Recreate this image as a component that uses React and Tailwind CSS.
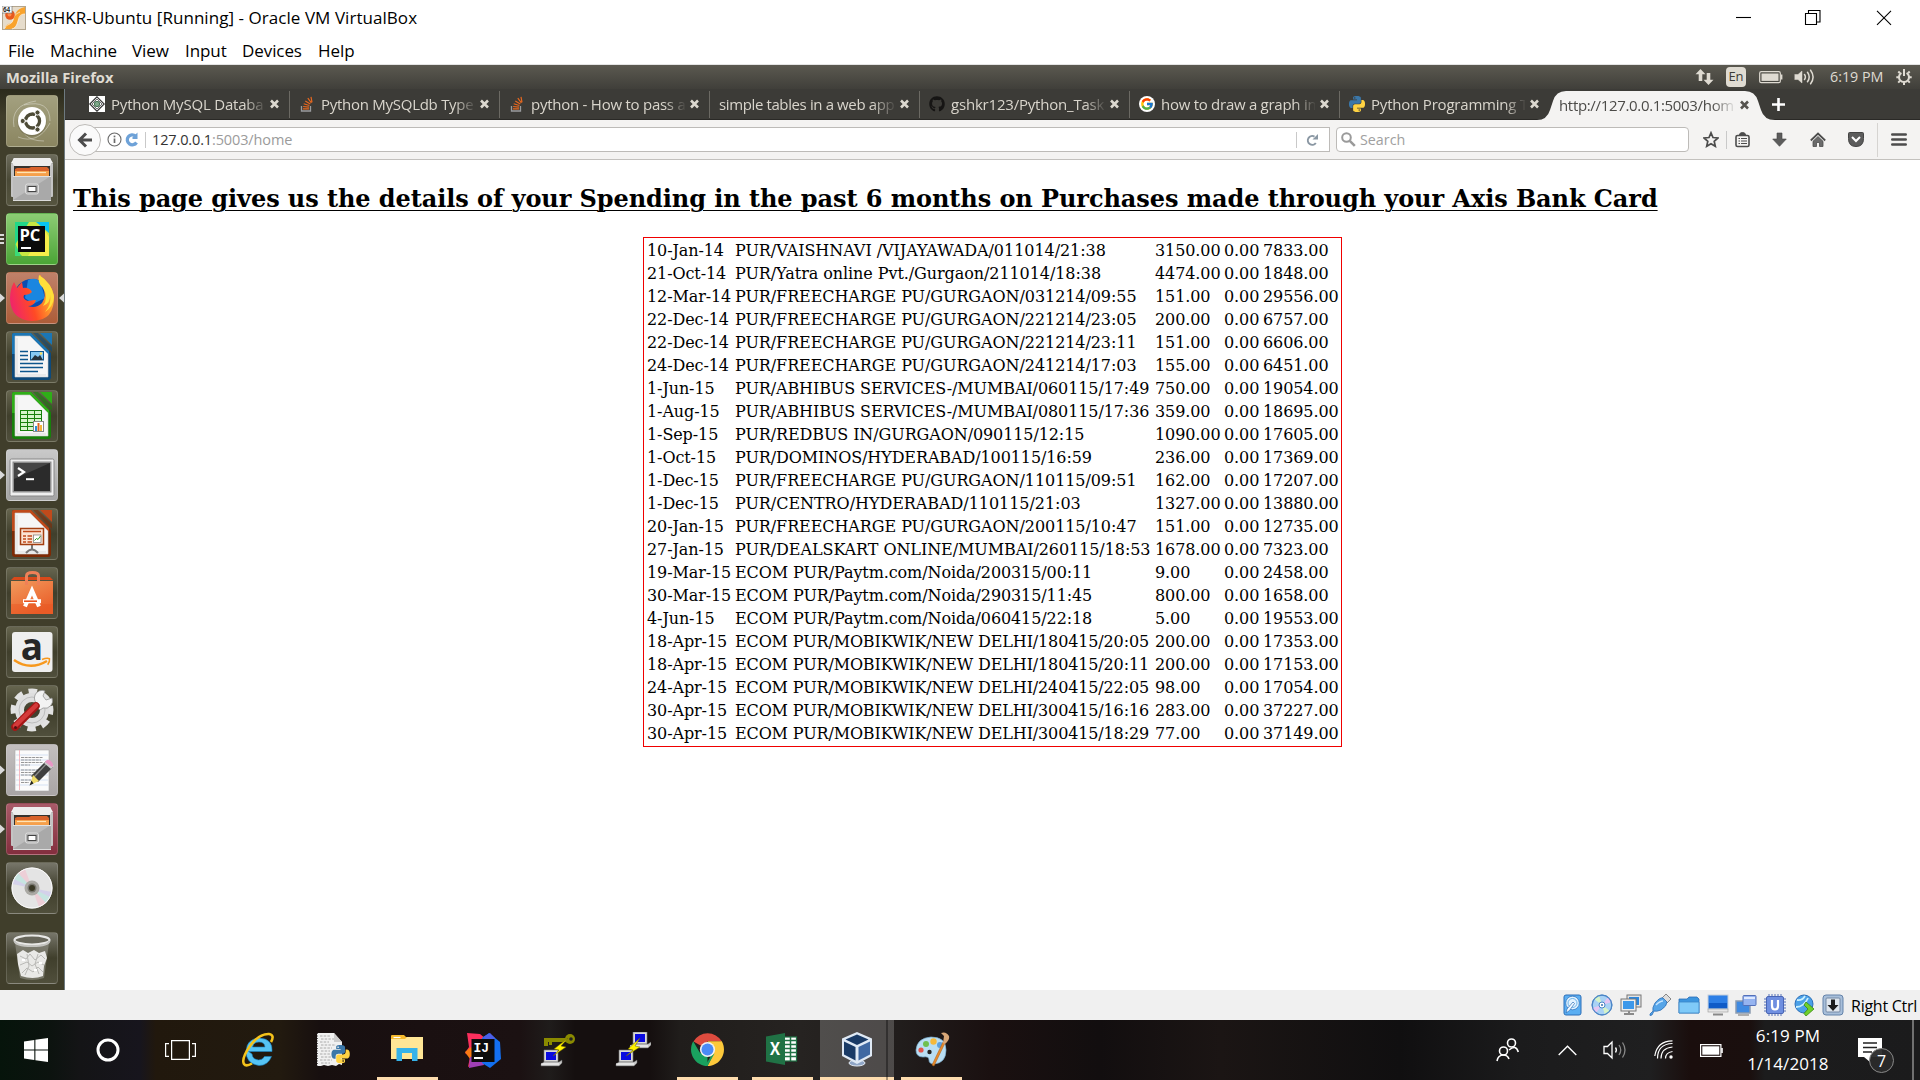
import React from "react";
import { FaGithub } from "react-icons/fa";
import { FcGoogle } from "react-icons/fc";

const rows = [
  ["10-Jan-14", "PUR/VAISHNAVI /VIJAYAWADA/011014/21:38", "3150.00", "0.00", "7833.00"],
  ["21-Oct-14", "PUR/Yatra online Pvt./Gurgaon/211014/18:38", "4474.00", "0.00", "1848.00"],
  ["12-Mar-14", "PUR/FREECHARGE PU/GURGAON/031214/09:55", "151.00", "0.00", "29556.00"],
  ["22-Dec-14", "PUR/FREECHARGE PU/GURGAON/221214/23:05", "200.00", "0.00", "6757.00"],
  ["22-Dec-14", "PUR/FREECHARGE PU/GURGAON/221214/23:11", "151.00", "0.00", "6606.00"],
  ["24-Dec-14", "PUR/FREECHARGE PU/GURGAON/241214/17:03", "155.00", "0.00", "6451.00"],
  ["1-Jun-15", "PUR/ABHIBUS SERVICES-/MUMBAI/060115/17:49", "750.00", "0.00", "19054.00"],
  ["1-Aug-15", "PUR/ABHIBUS SERVICES-/MUMBAI/080115/17:36", "359.00", "0.00", "18695.00"],
  ["1-Sep-15", "PUR/REDBUS IN/GURGAON/090115/12:15", "1090.00", "0.00", "17605.00"],
  ["1-Oct-15", "PUR/DOMINOS/HYDERABAD/100115/16:59", "236.00", "0.00", "17369.00"],
  ["1-Dec-15", "PUR/FREECHARGE PU/GURGAON/110115/09:51", "162.00", "0.00", "17207.00"],
  ["1-Dec-15", "PUR/CENTRO/HYDERABAD/110115/21:03", "1327.00", "0.00", "13880.00"],
  ["20-Jan-15", "PUR/FREECHARGE PU/GURGAON/200115/10:47", "151.00", "0.00", "12735.00"],
  ["27-Jan-15", "PUR/DEALSKART ONLINE/MUMBAI/260115/18:53", "1678.00", "0.00", "7323.00"],
  ["19-Mar-15", "ECOM PUR/Paytm.com/Noida/200315/00:11", "9.00", "0.00", "2458.00"],
  ["30-Mar-15", "ECOM PUR/Paytm.com/Noida/290315/11:45", "800.00", "0.00", "1658.00"],
  ["4-Jun-15", "ECOM PUR/Paytm.com/Noida/060415/22:18", "5.00", "0.00", "19553.00"],
  ["18-Apr-15", "ECOM PUR/MOBIKWIK/NEW DELHI/180415/20:05", "200.00", "0.00", "17353.00"],
  ["18-Apr-15", "ECOM PUR/MOBIKWIK/NEW DELHI/180415/20:11", "200.00", "0.00", "17153.00"],
  ["24-Apr-15", "ECOM PUR/MOBIKWIK/NEW DELHI/240415/22:05", "98.00", "0.00", "17054.00"],
  ["30-Apr-15", "ECOM PUR/MOBIKWIK/NEW DELHI/300415/16:16", "283.00", "0.00", "37227.00"],
  ["30-Apr-15", "ECOM PUR/MOBIKWIK/NEW DELHI/300415/18:29", "77.00", "0.00", "37149.00"],
];

const PY =
  "M14.25.18l.9.2.73.26.59.3.45.32.34.34.25.34.16.33.1.3.04.26.02.2-.01.13V8.5l-.05.63-.13.55-.21.46-.26.38-.3.31-.33.25-.35.19-.35.14-.33.1-.3.07-.26.04-.21.02H8.77l-.69.05-.59.14-.5.22-.41.27-.33.32-.27.35-.2.36-.15.37-.1.35-.07.32-.04.27-.02.21v3.06H3.17l-.21-.03-.28-.07-.32-.12-.35-.18-.36-.26-.36-.36-.35-.46-.32-.59-.28-.73-.21-.88-.14-1.05-.05-1.23.06-1.22.16-1.04.24-.87.32-.71.36-.57.4-.44.42-.33.42-.24.4-.16.36-.1.32-.05.24-.01h.16l.06.01h8.16v-.83H6.18l-.01-2.75-.02-.37.05-.34.11-.31.17-.28.25-.26.31-.23.38-.2.44-.18.51-.15.58-.12.64-.1.71-.06.77-.04.84-.02 1.27.05zm-6.3 1.98l-.23.33-.08.41.08.41.23.34.33.22.41.09.41-.09.33-.22.23-.34.08-.41-.08-.41-.23-.33-.33-.22-.41-.09-.41.09z";

const PyPaths = () => (
  <>
    <path d={PY} fill="#3b77a8" />
    <path d={PY} fill="#ffd343" transform="rotate(180 12 12)" />
  </>
);

/* ---------- host window ---------- */

const VBoxSmall = () => (
  <svg className="h-6 w-6 shrink-0" viewBox="0 0 24 24">
    <rect x=".5" y=".5" width="23" height="23" fill="#e6dccb" stroke="#b3a58d" />
    <path d="M23 1v7c-5 0-6 4-7 7s-2 8-8 8H3c0-4 3-5 6-6 3-2 2-5 4-8 2-5 5-7 10-8z" fill="#f9a32c" />
    <path d="M23 8c-6 0-6 4-7 7s-2 7-6 8M3 22c1-4 7-3 8-8s3-6 7-8" fill="none" stroke="#fff" strokeWidth=".9" opacity=".7" />
    <circle cx="8" cy="9" r="4.800" fill="#e8591c" />
    <circle cx="7.500" cy="8.500" r="2" fill="#ff8c4c" />
    <rect x="0" y="0" width="10" height="7" fill="#fff" stroke="#777" strokeWidth=".7" />
    <text x="1" y="6" fontSize="6.500" fontWeight="700" fontFamily="Liberation Sans, sans-serif" fill="#222">64</text>
  </svg>
);

function TitleBar() {
  return (
    <header className="flex h-[34px] items-center bg-white pl-0.5 pt-px">
      <VBoxSmall />
      <h1 className="ml-[5px] whitespace-nowrap text-[17px] leading-6 tracking-[0.05px] text-black">
        GSHKR-Ubuntu [Running] - Oracle VM VirtualBox
      </h1>
      <svg className="ml-auto mr-[27px] h-4 w-[158px] shrink-0" viewBox="0 0 158 16" fill="none" stroke="#000" strokeWidth="1.100">
        <path d="M1 7.500h15" />
        <path d="M70.500 3.500h11v11h-11zM73.500 3.500v-3h11.500v11.500h-3.500" />
        <path d="M142 .8l14 14M156 .8l-14 14" />
      </svg>
    </header>
  );
}

function MenuBar() {
  return (
    <nav className="flex h-[31px] items-center gap-4 border-b border-[#e4e4e4] bg-white pl-2 pt-[3px] text-[17px] leading-6 tracking-[-0.08px] text-black">
      <span className="w-[26px]">File</span>
      <span className="w-[66px]">Machine</span>
      <span className="w-[37px]">View</span>
      <span className="w-[41px]">Input</span>
      <span className="w-[60px]">Devices</span>
      <span className="w-[40px]">Help</span>
    </nav>
  );
}

/* ---------- guest top panel ---------- */

function TopPanel() {
  return (
    <div className="flex h-6 items-center bg-gradient-to-b from-[#5b5950] to-[#403f3a] pb-px pl-1.5 pr-2 text-[15px] text-[#dfdbd2]">
      <span className="text-[14.700px] font-bold leading-5">Mozilla Firefox</span>
      <svg className="ml-auto h-4 w-[19px]" viewBox="0 0 19 16" fill="#dfdbd2">
        <path d="M5.500 0l5 5.300H7.300V12H3.700V5.300H.5zM13.500 16l-5-5.300h3.200V4h3.600v6.700h3.200z" />
      </svg>
      <span className="ml-[12px] flex h-5 w-5 items-center justify-center rounded-sm bg-[#dfdbd2] text-[13px] leading-none text-[#3c3b37]">En</span>
      <svg className="ml-[13px] h-3.5 w-6" viewBox="0 0 24 14">
        <rect x=".7" y="1.700" width="20.600" height="11" rx="1.500" fill="none" stroke="#dfdbd2" strokeWidth="1.200" />
        <rect x="2.500" y="3.500" width="17" height="7.400" fill="#dfdbd2" />
        <path d="M22.600 4.500v5" stroke="#dfdbd2" strokeWidth="1.600" />
      </svg>
      <svg className="ml-[11px] h-[18px] w-[22px]" viewBox="0 0 22 18" fill="none" stroke="#dfdbd2" strokeWidth="1.500" strokeLinecap="round">
        <path d="M1 6.500h3L8 3v12l-4-3.500H1z" fill="#dfdbd2" strokeWidth=".5" />
        <path d="M10.500 6.500q1.800 2.500 0 5M13.500 4.300q3.400 4.700 0 9.400M16.600 2.200q5 6.800 0 13.600" />
      </svg>
      <span className="ml-[14px] w-[53px] whitespace-nowrap text-[14.300px] leading-5">6:19 PM</span>
      <svg className="ml-[13px] h-[18px] w-4" viewBox="0 0 16 18" fill="none" stroke="#dfdbd2">
        <path d="M5.400 4.800a5 5 0 1 0 5.200 0" strokeWidth="2" />
        <path d="M8 1v7" strokeWidth="2" />
        <path d="M3.800 5L2.300 3.500M12.200 5l1.500-1.500M3 9.200H.3M13 9.200h2.700M3.800 13l-1.600 1.600M12.200 13l1.600 1.600M8 14.500v2.600" strokeWidth="2" />
      </svg>
    </div>
  );
}

/* ---------- launcher ---------- */

const Cabinet = () => (
  <>
    <path d="M5 9L8 4h36l3 5z" fill="#f2f2f2" />
    <rect x="5" y="9" width="42" height="34" rx="1" fill="#c4c4c4" />
    <rect x="7" y="4" width="38" height="8" rx="2" fill="#ededed" />
    <rect x="8" y="12" width="36" height="11" fill="#35322e" />
    <path d="M9 15l2-1h12l2-1h16l2 2v8H9z" fill="#d8622b" />
    <path d="M9 17h34v6H9z" fill="#f6a04b" />
    <path d="M11 18.500h29" stroke="#ffe3b5" strokeWidth="1.200" />
    <path d="M7 22h38v25H7z" fill="#a9a9a9" />
    <path d="M7 22h38L7 46z" fill="#bcbcbc" />
    <path d="M7 22.500h38" stroke="#e2e2e2" />
    <path d="M7 46.500h38" stroke="#dcdcdc" />
    <rect x="19.500" y="30" width="13" height="10" rx="2" fill="#b4b4b4" stroke="#dedede" />
    <rect x="22" y="32.500" width="8" height="5" fill="#fff" stroke="#444" />
  </>
);

const OfficeDoc = ({ c, d, children }) => (
  <>
    <path d="M8 2h17l20 20v24q0 3-3 3H9q-3 0-3-3V4q0-2 2-2z" fill={d} />
    <path d="M8 2h17l18 18v3H6V4q0-2 2-2z" fill={c} />
    <path d="M34 2h12v12z" fill={c} />
    <path d="M27 2h5l14 14v5z" fill={d} opacity=".6" />
    <path d="M9 5h15l18 18v23H9z" fill="#f6f6f6" stroke="#c9c9c9" strokeWidth=".6" />
    <path d="M11 7v37h29" fill="none" stroke="#ddd" />
    {children}
  </>
);

const tileArt = {
  ubuntu: (
    <>
      <path d="M8 32Q4 10 30 6M12 42q20 8 32-14M44 26Q44 4 18 10M38 46Q12 46 14 20" fill="none" stroke="#fff" strokeWidth="1" opacity=".35" />
      <circle cx="26" cy="27" r="14.500" fill="#6f6b4c" opacity=".6" />
      <circle cx="26" cy="26" r="14" fill="#fff" />
      <circle cx="26.500" cy="26" r="7" fill="none" stroke="#4d4b36" strokeWidth="3.400" />
      <path d="M26.500 26L14 26M26.500 26l6-11M26.500 26l6 11" stroke="#fff" strokeWidth="1.400" />
      <circle cx="26.500" cy="26" r="5" fill="#fff" />
      <g fill="#4d4b36" stroke="#fff" strokeWidth="1">
        <circle cx="16.700" cy="26" r="2.600" />
        <circle cx="31.500" cy="17.500" r="2.600" />
        <circle cx="31.500" cy="34.500" r="2.600" />
      </g>
    </>
  ),
  files: <Cabinet />,
  pycharm: (
    <>
      <path d="M9 9h24l10 5v29H16L9 37z" fill="#c8e842" />
      <path d="M9 9h14L9 32z" fill="#21d789" />
      <path d="M30 9h13v11z" fill="#07c3f2" />
      <path d="M9 43V30l6 13z" fill="#3bdb78" />
      <path d="M38 16l5 8v19H22z" fill="#f5ee4a" />
      <rect x="12" y="13" width="27" height="26" fill="#0b0b0b" />
      <text x="13.500" y="27.500" fontSize="16.500" fontWeight="700" fontFamily="Open Sans, sans-serif" fill="#fff">PC</text>
      <rect x="15" y="34" width="10" height="2" fill="#fff" />
    </>
  ),
  firefox: (
    <>
      <circle cx="26" cy="25" r="18" fill="#0a4db0" />
      <path d="M22 8q9-4 13 4l4 14-12 6-8-6z" fill="#1a86e0" />
      <path d="M33 3q12 8 15 20 1 26-22 26Q5 48 4 27 4 17 8 10l3 6 5-6 1 6q6-1 9 4-3 3-8 3-2 4 4 6 5-1 8-1-2 6-8 6 8 3 14-3 5-7 1-16-5-6-2-12z" fill="url(#fox)" />
      <path d="M33 3q-2 8 4 13 6 9 0 18 8-3 7-12 2 10-5 18 8-5 9-15Q46 11 33 3z" fill="#ffdf3a" />
    </>
  ),
  writer: (
    <OfficeDoc c="#1b76b5" d="#0d4a7c">
      <path d="M14 20.500h8M14 24.500h8M14 28.500h8M14 32.500h23M14 36.500h23M14 40.500h18" stroke="#0d568d" strokeWidth="1.700" />
      <rect x="24.500" y="20.500" width="13" height="8.500" fill="#86c9f3" stroke="#0d568d" />
      <path d="M25 29l4-5 3 2 2-2 3 5z" fill="#26333c" />
      <circle cx="35" cy="22.500" r="1.200" fill="#ffe05c" />
    </OfficeDoc>
  ),
  calc: (
    <OfficeDoc c="#2fae18" d="#17800b">
      <rect x="14.500" y="20.500" width="21" height="20" fill="#d6f4cb" stroke="#17800b" />
      <path d="M14 24.500h22M14 28.500h22M14 32.500h22M14 36.500h22M21.500 20v21M28.500 20v21" stroke="#17800b" />
      <rect x="27.500" y="31.500" width="10" height="10" fill="#fff" stroke="#888" />
      <path d="M29 36h2v5h-2z" fill="#2a8fd8" />
      <path d="M31.500 33h2v8h-2z" fill="#e06520" />
      <path d="M34 35h2v6h-2z" fill="#f4b53a" />
    </OfficeDoc>
  ),
  impress: (
    <OfficeDoc c="#c04a1b" d="#7e2a05">
      <path d="M26 37v4M20 45q6-7 12 0" stroke="#777" strokeWidth="2" fill="none" />
      <rect x="14.500" y="20.500" width="23" height="16" fill="#fbe3d3" stroke="#a33e10" strokeWidth="1.500" />
      <path d="M17 23.500h18M17 28h3M17 31h3M17 34h3M21.500 28h4.500M21.500 31h4.500M21.500 34h4.500" stroke="#c04a1b" strokeWidth="1.600" />
      <rect x="27.500" y="27" width="7.500" height="7.500" fill="#fff" stroke="#777" strokeWidth=".7" />
      <path d="M28.500 32.500l2-2 1.500 1 2.500-3.500" stroke="#2a9a20" fill="none" />
    </OfficeDoc>
  ),
  terminal: (
    <>
      <rect x="4" y="10" width="44" height="37" rx="1.500" fill="#efefef" stroke="#888" />
      <rect x="6.500" y="12.500" width="39" height="31" fill="#8e8e8e" />
      <rect x="8" y="14" width="36" height="28" fill="#2b2b2b" />
      <path d="M8 14h36L8 30z" fill="#454545" />
      <path d="M12 19l6 4-6 4" stroke="#fff" strokeWidth="2.200" fill="none" />
      <path d="M20 30.200h8" stroke="#fff" strokeWidth="2" />
    </>
  ),
  software: (
    <>
      <path d="M5 13l3-3h36l3 3z" fill="#d8491a" />
      <path d="M5 14h42v33H5z" fill="url(#bag)" />
      <path d="M20.500 18V9q0-3.500 6-3.500t6 3.500v9" fill="none" stroke="#ee8058" strokeWidth="3" />
      <path d="M5 37h42v10H5z" fill="#e95420" opacity=".4" />
      <path d="M19 39.500l7-16 7 16" fill="none" stroke="#fff" strokeWidth="4" />
      <path d="M17 34.200h18" stroke="#fff" strokeWidth="4" />
      <path d="M18 34.200h13" stroke="#e95420" strokeWidth="1.600" />
    </>
  ),
  amazon: (
    <>
      <rect x="6" y="6" width="40.500" height="40" rx="3" fill="#efefef" />
      <text x="26" y="34" textAnchor="middle" fontSize="37" fontWeight="700" fontFamily="Open Sans, sans-serif" fill="#262626">a</text>
      <path d="M8 34q16 11 33 1" fill="none" stroke="#f7981d" strokeWidth="2.400" />
      <path d="M36 33.500q5-2 7.500-.8.500 3-1.800 6" fill="none" stroke="#f7981d" strokeWidth="1.500" />
    </>
  ),
  settings: (
    <>
      <circle cx="26" cy="25" r="18.500" fill="none" stroke="#e2e2e2" strokeWidth="6" strokeDasharray="8.200 6.330" transform="rotate(-12 26 25)" />
      <circle cx="26" cy="25" r="12.500" fill="none" stroke="#dedede" strokeWidth="9" />
      <circle cx="26" cy="25" r="13" fill="none" stroke="#bdbdbd" />
      <path d="M33 20a7.500 7.500 0 0 1 6-14l-2 5 3 4 6-2a7.500 7.500 0 0 1-9 10l-3 2-4-3z" fill="#f3f3f3" stroke="#888" strokeWidth=".7" />
      <path d="M30 21L9 42" stroke="#a51616" strokeWidth="7.500" strokeLinecap="round" />
      <path d="M30 20.500L9 41" stroke="#d43a3a" strokeWidth="4.500" strokeLinecap="round" />
      <circle cx="9.500" cy="42.500" r="1.500" fill="#551010" />
    </>
  ),
  gedit: (
    <>
      <path d="M9 6h34v41H9z" fill="#fbfbfb" stroke="#aaa" strokeWidth=".6" />
      <path d="M10 11h32M10 16h32M10 21h32M10 26h32M10 31h32M10 36h32M10 41h32" stroke="#cddcf2" strokeWidth=".8" />
      <path d="M13.500 6v40" stroke="#f4a9b2" strokeWidth=".8" />
      <path d="M15 13.500h22M15 16h20M15 18.500h22M15 21h9M15 26h21M15 28.500h18M15 31h12M15 36h10M15 38.500h8" stroke="#8b8b8b" strokeWidth=".9" strokeDasharray="3 .7" />
      <path d="M40 17l7 6-15 15-7-6z" fill="#3f3f3f" />
      <path d="M42 18l-14 15" stroke="#8b8b8b" strokeWidth="1.300" />
      <path d="M38 19l3-3 7 6-3 3z" fill="#ccc" />
      <path d="M41 16q3-1 6 4v2l-1 1-7-5z" fill="#e897c5" />
      <path d="M27 31l6 6-9 4z" fill="#f0dc6a" />
      <path d="M25.500 36.500l2 3-4 2z" fill="#222" />
    </>
  ),
  cabinet: <Cabinet />,
  disc: (
    <>
      <circle cx="26" cy="26" r="20.500" fill="#e4e4e4" />
      <path d="M26 26L12 11A20 20 0 0 1 19 7zM26 26L40 41A20 20 0 0 1 33 45z" fill="#f5b9c9" opacity=".5" />
      <path d="M26 26L8 17A20 20 0 0 1 12 11zM26 26L44 35A20 20 0 0 1 40 41z" fill="#a9e5dd" opacity=".5" />
      <path d="M26 26L6.500 22A20 20 0 0 1 8 17zM26 26L45.500 30A20 20 0 0 1 44 35z" fill="#c3bdf0" opacity=".5" />
      <circle cx="26" cy="26" r="20" fill="none" stroke="#fafafa" />
      <circle cx="26" cy="26" r="7.500" fill="#aaa9a4" />
      <circle cx="26" cy="26" r="4.500" fill="#77766f" />
      <circle cx="26" cy="26" r="3" fill="#3a3926" />
    </>
  ),
  trash: (
    <>
      <path d="M9 11l5 35q12 4 24 0l5-35z" fill="#a9a99f" opacity=".45" />
      <path d="M11 22l6-4 5 3 6-3 5 3 6-2 2 7-3 8-1 10q-10 4-22 0l-3-12z" fill="#e9e9e7" />
      <path d="M14 24l6 3 4-5 5 6 6-5 4 4M14 33l7-3 5 4 6-4 6 3M16 41l5-5 6 4 5-5 5 5M21 22l2 12-4 9M32 22l-3 10 4 10" stroke="#b9b9b6" strokeWidth="1" fill="none" />
      <path d="M16 28h3M28 38h3M33 31h3" stroke="#fff" strokeWidth="2" />
      <ellipse cx="26" cy="8" rx="17.500" ry="4.500" fill="#67665a" stroke="#e8e8e6" strokeWidth="2.200" />
      <path d="M8.500 9q1 5 17.500 5T43.500 9" fill="none" stroke="#c4c4c0" strokeWidth="2" />
    </>
  ),
};

const launcherTiles = [
  { id: "ubuntu", cls: "from-[#a3a07f] to-[#8b8661]" },
  { id: "files", cls: "from-[#6c6b5b] via-[#4a4936] to-[#55543f]" },
  { id: "pycharm", cls: "from-[#8ccc74] to-[#4aa535]", left: "bars" },
  { id: "firefox", cls: "from-[#bf8169] to-[#ad5d38]", left: "tri", right: true },
  { id: "writer", cls: "from-[#66654f] via-[#403f2c] to-[#504f3c]" },
  { id: "calc", cls: "from-[#66654f] via-[#403f2c] to-[#504f3c]" },
  { id: "terminal", cls: "from-[#c9c9c9] to-[#a4a4a4]", left: "tri" },
  { id: "impress", cls: "from-[#66654f] via-[#403f2c] to-[#504f3c]" },
  { id: "software", cls: "from-[#66654f] via-[#403f2c] to-[#504f3c]" },
  { id: "amazon", cls: "from-[#66654f] via-[#403f2c] to-[#504f3c]" },
  { id: "settings", cls: "from-[#66654f] via-[#403f2c] to-[#504f3c]" },
  { id: "gedit", cls: "from-[#c3bfbf] to-[#a9a5a5]", left: "tri" },
  { id: "cabinet", cls: "from-[#a85a68] to-[#832e3e]", left: "tri" },
  { id: "disc", cls: "from-[#77766a] via-[#403f2c] to-[#504f3c]" },
  { id: "trash", cls: "from-[#77766a] via-[#403f2c] to-[#504f3c]", gap: true },
];

function Launcher() {
  return (
    <aside className="flex w-[65px] shrink-0 flex-col gap-[7px] border-r border-[#6e7a80] bg-gradient-to-b from-[#2b2a1c] via-[#403e2b] via-[3%] to-[#403e2b] pt-1.5">
      {launcherTiles.map((t) => (
        <div key={t.id} className={"flex h-[52px] items-center " + (t.gap ? "mt-[11px]" : "")}>
          <svg className="h-3 w-1.5 shrink-0" viewBox="0 0 6 12">
            {t.left === "tri" && <path d="M0 1.500l5 4.500-5 4.500z" fill="#d9d9d9" />}
            {t.left === "bars" && <path d="M0 2h4M0 6h4M0 10h4" stroke="#d9d9d9" strokeWidth="2" />}
          </svg>
          <div className={"h-[52px] w-[52px] shrink-0 rounded border border-white/15 bg-gradient-to-b " + t.cls}>
            <svg className="-ml-px -mt-px h-[52px] w-[52px]" viewBox="0 0 52 52">
              <defs>
                {t.id === "firefox" && (
                  <linearGradient id="fox" x1="0" y1=".6" x2="1" y2=".3">
                    <stop offset="0" stopColor="#f0246b" />
                    <stop offset=".45" stopColor="#ff4a25" />
                    <stop offset="1" stopColor="#ffc930" />
                  </linearGradient>
                )}
                {t.id === "software" && (
                  <linearGradient id="bag" x1="0" y1="0" x2=".6" y2="1">
                    <stop offset="0" stopColor="#f19a5c" />
                    <stop offset="1" stopColor="#ea5f2a" />
                  </linearGradient>
                )}
              </defs>
              {tileArt[t.id]}
            </svg>
          </div>
          {t.right && (
            <svg className="h-3 w-1.5 shrink-0" viewBox="0 0 6 12"><path d="M6 1.500L1 6l5 4.500z" fill="#d9d9d9" /></svg>
          )}
        </div>
      ))}
    </aside>
  );
}

/* ---------- browser ---------- */

const StackIcon = () => (
  <svg className="h-4 w-4" viewBox="0 0 16 16" fill="none">
    <path d="M2.500 10v5h9v-5" stroke="#9a9c9f" strokeWidth="1.300" />
    <path d="M4 12.800h6M4.100 10.500l5.900.7M4.700 7.800l5.700 1.700M6.300 4.900l5 3M8.800 2.200l3.600 4.600M12 .8l1 5.500" stroke="#e8681f" strokeWidth="1.200" />
  </svg>
);

const favicons = {
  diamond: (
    <svg className="h-4 w-4 bg-white" viewBox="0 0 16 16" fill="none" stroke="#333">
      <path d="M8 .8L15.200 8 8 15.200.8 8z" strokeWidth="1.200" />
      <path d="M8 3l5 5-5 5-5-5z" strokeWidth=".7" />
      <circle cx="8" cy="8" r="2.700" fill="#7fa88a" stroke="#2a5a3a" strokeWidth=".8" />
    </svg>
  ),
  stack: <StackIcon />,
  github: <FaGithub className="h-4 w-4 text-[#161514]" />,
  google: (
    <span className="flex h-4 w-4 items-center justify-center rounded-full bg-white">
      <FcGoogle className="h-3.5 w-3.5" />
    </span>
  ),
  python: <svg className="h-4 w-4" viewBox="0 0 24 24"><PyPaths /></svg>,
};

const TabClose = ({ color }) => (
  <svg className="ml-auto h-2.5 w-[9px] shrink-0" viewBox="0 0 9 10" stroke={color} strokeWidth="2.600">
    <path d="M1 1.500l7 7M8 1.500l-7 7" />
  </svg>
);

const tabs = [
  ["diamond", "Python MySQL Databa", "tracking-[-0.2px]"],
  ["stack", "Python MySQLdb Type", "tracking-[-0.27px]"],
  ["stack", "python - How to pass a", "tracking-[-0.25px]"],
  [null, "simple tables in a web app", "tracking-[-0.38px]"],
  ["github", "gshkr123/Python_Task", "tracking-[-0.2px]"],
  ["google", "how to draw a graph in", "tracking-[-0.27px]"],
  ["python", "Python Programming T", "tracking-[-0.2px]"],
];

function TabStrip() {
  return (
    <div className="flex h-[31px] border-b border-[#2a2926] bg-[#3c3b37] pl-[15px]">
      {tabs.map(([icon, label, track], i) => (
        <div key={label} className="flex h-[30px] w-[210px] shrink-0 items-center">
          <div className="flex w-[209px] items-center pl-[9px] pr-[10px]">
            {icon && <span className="mr-1.5 shrink-0">{favicons[icon]}</span>}
            <span
              className={
                "overflow-hidden whitespace-nowrap text-[15px] leading-6 text-[#d9d5cc] [mask-image:linear-gradient(to_right,black_87%,transparent_101%)] " +
                (icon ? "w-[154px] " : "w-[176px] ") + track
              }
            >
              {label}
            </span>
            <TabClose color="#dcd8cf" />
          </div>
          {i < 6 && <span className="h-[27px] w-px bg-[#6b6963]" />}
        </div>
      ))}
      <div className="relative z-10 -ml-[13px] mt-[2px] flex h-[29px] w-[238px] shrink-0 items-center pb-px">
        <svg className="absolute inset-0 h-full w-full" viewBox="0 0 238 29" preserveAspectRatio="none">
          <path d="M0 29Q10 29 13 19L16 10Q19 0 29 0H208Q218 0 221 10L224 19Q227 29 238 29Z" fill="#f4f3f2" />
        </svg>
        <span className="relative ml-[22px] w-[176px] overflow-hidden whitespace-nowrap text-[15px] leading-6 tracking-[-0.33px] text-[#4c4b48] [mask-image:linear-gradient(to_right,black_87%,transparent_101%)]">
          http://127.0.0.1:5003/hom
        </span>
        <span className="relative ml-[5px] flex"><TabClose color="#55534f" /></span>
      </div>
      <svg className="-ml-[3px] mt-2 h-[15px] w-[13px]" viewBox="0 0 13 15" stroke="#fff" strokeWidth="2.600"><path d="M0 7.500h13M6.500 1v13" /></svg>
    </div>
  );
}

function NavBar() {
  return (
    <div className="flex h-[40px] items-center border-b border-[#c3c1be] bg-[#f4f3f2] text-[15px]">
      <span className="z-10 ml-1 flex h-8 w-8 shrink-0 items-center justify-center rounded-full border border-[#bdbbb8] bg-[#fafafa]">
        <svg className="h-4 w-4" viewBox="0 0 16 16" fill="none" stroke="#4c4c4c" strokeWidth="3"><path d="M9 1.500L2.500 8 9 14.500M3 8h12" /></svg>
      </span>
      <div className="-ml-2 flex h-[25px] w-[1237px] shrink-0 items-center border border-[#bdbbb8] bg-white pl-[13px]">
        <svg className="h-[15px] w-[15px]" viewBox="0 0 15 15" fill="none" stroke="#6a6a6a"><circle cx="7.500" cy="7.500" r="6.500" strokeWidth="1.100" /><path d="M7.500 6.500V11" strokeWidth="1.700" /><path d="M7.500 3.600v1.700" strokeWidth="1.700" /></svg>
        <svg className="ml-[3px] h-[15px] w-[15px]" viewBox="0 0 15 15" fill="none"><path d="M11.500 10.500A5 5 0 1 1 10.500 4" stroke="#6ea2d8" strokeWidth="3.300" /><path d="M7.500 7V5.500L12.500.5v6.500z" fill="#6ea2d8" /></svg>
        <span className="ml-[5px] h-4 w-px bg-[#c9c9c9]" />
        <span className="ml-[6px] text-[14.500px] leading-6 tracking-[-0.13px] text-[#9b9b9b]"><span className="text-[#333]">127.0.0.1</span>:5003/home</span>
        <span className="ml-auto h-4 w-px bg-[#c9c9c9]" />
        <svg className="ml-[9px] mr-[10px] h-[14px] w-[13px]" viewBox="0 0 13 14" fill="none"><path d="M9.800 10A4.400 4.400 0 1 1 8.500 3.600" stroke="#8a97a3" strokeWidth="2" /><path d="M6.500 6.500h5.500V1z" fill="#8a97a3" /></svg>
      </div>
      <div className="ml-1.5 flex h-[25px] w-[353px] shrink-0 items-center rounded-sm border border-[#bdbbb8] bg-white pl-1">
        <svg className="h-[15px] w-[15px]" viewBox="0 0 15 15" fill="none" stroke="#9a9a9a"><circle cx="5.500" cy="5.500" r="4.300" strokeWidth="2" /><path d="M8.800 8.800l5 5" strokeWidth="2.600" /></svg>
        <span className="ml-1 text-[14.300px] leading-6 text-[#a0a0a0]">Search</span>
      </div>
      <svg className="ml-[14px] h-[17px] w-4 shrink-0" viewBox="0 0 16 17" fill="none" stroke="#4c4c4c" strokeWidth="1.700"><path d="M8 1.800l2 4.700 5 .5-3.800 3.300 1.100 5L8 12.700l-4.300 2.600 1.100-5L1 7l5-.5z" /></svg>
      <span className="ml-[7px] h-[18px] w-px bg-[#c9c9c9]" />
      <svg className="ml-2 h-4 w-[15px] shrink-0" viewBox="0 0 15 16" fill="none" stroke="#4c4c4c"><rect x="1" y="3.500" width="13" height="11" rx="1.500" strokeWidth="1.600" /><path d="M4.500 3q0-2.500 3-2.500t3 2.500z" fill="#4c4c4c" /><path d="M3.500 6.500h1.500M3.500 9h1.500M3.500 11.500h1.500M6 6.500h6M6 9h6M6 11.500h6" strokeWidth="1.200" /></svg>
      <svg className="ml-[22px] h-[15px] w-[15px] shrink-0" viewBox="0 0 15 15" fill="#5c5c5c" stroke="#444" strokeWidth=".6"><path d="M5 1h5v6h4.300L7.500 14.300.7 7H5z" /></svg>
      <svg className="ml-[23px] h-[15px] w-4 shrink-0" viewBox="0 0 16 15" fill="none" stroke="#4c4c4c"><path d="M.8 8.500L8 1.500l7.200 7" strokeWidth="1.800" /><path d="M8 4.500l5 4.800V14.500H9.500v-4h-3v4H3V9.300z" fill="#6b6b6b" strokeWidth=".8" /></svg>
      <svg className="ml-[22px] h-[15px] w-4 shrink-0" viewBox="0 0 16 15"><path d="M1.500.5h13q1 0 1 1v5q0 8-7.500 8T.5 6.500v-5q0-1 1-1z" fill="#5c5c5c" stroke="#444" /><path d="M4 5l4 4 4-4" fill="none" stroke="#fff" strokeWidth="2" /></svg>
      <span className="ml-[13px] h-[34px] w-px bg-[#d6d4d1]" />
      <svg className="ml-[13px] h-[13px] w-4 shrink-0" viewBox="0 0 16 13" stroke="#4c4c4c" strokeWidth="2.600" strokeLinecap="round"><path d="M1.300 1.500h13.400M1.300 6.500h13.400M1.300 11.500h13.400" /></svg>
    </div>
  );
}

const cols = ["w-[86px]", "w-[418px]", "w-[67px]", "w-[37px]", "w-[77px]"];

const trackingFor = (text) => {
  if (/VAISHNAVI|CENTRO/.test(text)) return "tracking-[-0.05px]";
  if (/FREECHARGE|DEALSKART|Yatra/.test(text)) return "tracking-[-0.075px]";
  if (/MOBIKWIK/.test(text)) return "tracking-[-0.14px]";
  return "tracking-[-0.1px]";
};

function Page() {
  return (
    <main className="flex-1 bg-white pl-2 font-['DejaVu_Serif',serif] text-black">
      <h2 className="mt-6 whitespace-nowrap text-[24px] font-bold leading-[29px] tracking-[-0.072px] underline decoration-1 underline-offset-[3px]">
        This page gives us the details of your Spending in the past 6 months on Purchases made through your Axis Bank Card
      </h2>
      <table className="ml-[570px] mt-[24px] w-[699px] table-fixed border-separate border-spacing-0.5 border border-[#f00000] text-[16px] leading-[19px] tracking-[-0.1px]">
        <tbody>
          {rows.map((r, i) => (
            <tr key={i}>
              {r.map((c, j) => (
                <td key={j} className={"whitespace-nowrap p-px " + cols[j] + " " + (j === 1 ? trackingFor(c) : "")}>{c}</td>
              ))}
            </tr>
          ))}
        </tbody>
      </table>
    </main>
  );
}

/* ---------- VirtualBox status bar ---------- */

const statusIcons = [
  <><rect x="2" y="1" width="17" height="20" rx="2" fill="#5aaef2" stroke="#2c6fb8" /><circle cx="10.500" cy="9" r="6.800" fill="#e3f3ff" stroke="#2c6fb8" strokeWidth=".7" /><circle cx="10.500" cy="9" r="4.500" fill="none" stroke="#6fb4ea" /><path d="M4 19l1-4 6-7 1.500 1.500-5 7z" fill="#f4faff" stroke="#2c6fb8" strokeWidth=".7" /></>,
  <><circle cx="11" cy="11" r="10" fill="#a9d2f5" stroke="#5b8fc4" /><path d="M11 11L3 5a10 10 0 0 1 5-4zM11 11l8 6a10 10 0 0 1-5 4z" fill="#d5f3c8" /><path d="M11 11L17 3a10 10 0 0 1 4 5zM11 11L5 19a10 10 0 0 1-4-5z" fill="#e4c5f2" /><circle cx="11" cy="11" r="9.800" fill="none" stroke="#4a85c8" strokeWidth="1.200" /><circle cx="11" cy="11" r="3" fill="#fff" stroke="#4a85c8" /><circle cx="11" cy="11" r="1" fill="#3a70b0" /></>,
  <><rect x="7" y="1" width="14" height="12" fill="#e4e4e4" stroke="#777" /><rect x="9" y="3" width="10" height="8" fill="#2a86dd" /><rect x="1" y="5" width="15" height="12" fill="#eee" stroke="#777" /><rect x="3" y="7" width="11" height="8" fill="#3d98ea" /><path d="M4 20h10M9 17v3" stroke="#8a8a8a" strokeWidth="2" /></>,
  <><path d="M13 4l4-4 5 5-4 4z" fill="#ddd" stroke="#888" /><path d="M6 9q5-6 8-5l4 4q0 4-6 8-5 2-7 1l-2 4-2 .5L1 20l3-3q-1-3 2-8z" fill="#56a5e8" stroke="#2c6fb8" strokeWidth=".8" /><path d="M7 11q4-4 7-4" stroke="#c4e4ff" fill="none" strokeWidth="1.500" /></>,
  <><path d="M1 5h8l2-2h8l2 2v14H1z" fill="#3c95de" stroke="#2c6fb8" strokeWidth=".8" /><path d="M1 8h20v11H1z" fill="#7fcaf8" stroke="#3b85c6" strokeWidth=".8" /></>,
  <><rect x="1" y="1" width="20" height="14" fill="#2d7fe6" stroke="#c5d0dc" /><path d="M2 9h18v5H2z" fill="#0f5bc7" /><rect x="1" y="15" width="20" height="3" fill="#e6e6e6" stroke="#999" strokeWidth=".6" /><path d="M6 20.500h10" stroke="#888" strokeWidth="2" /></>,
  <><rect x="1" y="7" width="14" height="12" fill="#3f8ae2" stroke="#8b9bb0" strokeWidth="1.500" /><path d="M3 21h11" stroke="#999" strokeWidth="1.500" /><rect x="8" y="1.500" width="13" height="10" rx="1" fill="#96b4f0" stroke="#5470b8" /><path d="M9 4h11" stroke="#dfe9ff" strokeWidth="2" /></>,
  <><path d="M5 0v22M8 0v22M11 0v22M14 0v22M17 0v22M0 5h22M0 8h22M0 11h22M0 14h22M0 17h22" stroke="#5673b8" /><rect x="2.500" y="2.500" width="17" height="17" rx="1.500" fill="#6f8fe0" stroke="#4a66b5" /><path d="M8 6v6q0 3.500 3 3.500t3-3.500V6" fill="none" stroke="#fff" strokeWidth="2.200" /></>,
  <><circle cx="11" cy="10" r="9" fill="#4aa0e8" stroke="#2c6fb8" /><path d="M4 6q5 1 8-4M3 13q8 0 12-9" stroke="#c9f0ff" strokeWidth="1.800" fill="none" /><path d="M13 8l8 7-8 7-2-2.500 4-4.500-4-4z" fill="#6ed02c" stroke="#3a8a10" strokeWidth=".8" /></>,
  <><rect x="1" y="1" width="20" height="20" rx="3" fill="#a8bfda" stroke="#6483aa" /><rect x="4" y="4" width="14" height="14" rx="1" fill="#dfe6ee" stroke="#7489a5" /><path d="M9 5.500h4V11h3.500L11 17 5.500 11H9z" fill="#1c1c1c" /></>,
];

function StatusBar() {
  return (
    <div className="flex h-[30px] items-center justify-end gap-[6.900px] bg-[#f0f0f0] pr-[3px]">
      {statusIcons.map((ic, i) => (
        <svg key={i} className="h-[22px] w-[22px] shrink-0" viewBox="0 0 22 22">{ic}</svg>
      ))}
      <span className="w-[66px] whitespace-nowrap pt-0.5 text-[16px] leading-6 tracking-[-0.25px] text-black">Right Ctrl</span>
    </div>
  );
}

/* ---------- Windows taskbar ---------- */

const Computer = ({ x, y }) => (
  <g transform={`translate(${x} ${y})`}>
    <path d="M3 0h14v12H3z" fill="#d9d9d9" stroke="#777" strokeWidth=".6" />
    <path d="M5 2h10v8H5z" fill="#0a0ae0" />
    <path d="M3 12h15l3-2v3l-3 3H0v-2z" fill="#c9c9c9" stroke="#666" strokeWidth=".5" />
    <path d="M0 14h18" stroke="#fff" />
  </g>
);

const taskApps = [
  { id: "ie", art: (
    <>
      <path d="M8.500 19.500H32Q33 7 19.500 6 7 6.500 6 19q0 13 13 14.500 9 0 12.500-9h-7q-2 3.500-6 3.500-6-.5-6.500-6zM12.500 15q1-5 6.500-5t6 5z" fill="#56c4f4" fillRule="evenodd" stroke="#1a83c4" strokeWidth=".6" />
      <path d="M31 10q4-7-2-8-10-.5-19 12-9 13-6 18 2 3 8-.5" fill="none" stroke="#f5c21b" strokeWidth="2.600" />
    </>
  ) },
  { id: "py", art: (
    <>
      <path d="M2 1h17l8 9v23l-3-1-3 2-4-1-4 1-4-1-3 1H2z" fill="#f1f1f1" />
      <path d="M5 4h11M6 7h14M5 10h9M6 13h15M5 16h12M6 19h9M5 22h11M6 25h10M5 28h12M6 31h9" stroke="#999" strokeWidth=".8" strokeDasharray="2.500 1.200" />
      <path d="M2.500 1v33" stroke="#555" strokeDasharray="1 1.500" />
      <path d="M19 1v9h8z" fill="#ccc" />
      <g transform="translate(16.500 13) scale(.76)"><PyPaths /></g>
    </>
  ) },
  { id: "explorer", running: true, art: (
    <>
      <path d="M1 4q0-1 1-1h12l2 2H33v3H1z" fill="#f4b92c" />
      <path d="M1 7h14l2-2h16v22H1z" fill="#ffe696" />
      <path d="M3.500 5.500h7" stroke="#fff" strokeWidth="1.200" />
      <path d="M6.500 29V16h21v13h-5.500v-8h-10v8z" fill="#35b2e9" />
    </>
  ) },
  { id: "idea", art: (
    <>
      <path d="M2 1l13 1 6 5-10 24-8 4 2-10L0 21l4-6z" fill="#fc2f5d" />
      <path d="M0 20l6-5 5 12-6 0z" fill="#f97a12" />
      <path d="M5 25l12-2 2 10-15 3z" fill="#a03fb5" />
      <path d="M17 6l7-5 11 9 1 17-11 9-8-5z" fill="#1370f0" />
      <path d="M18 5l7-4 5 5-4 8z" fill="#4c5fe8" />
      <rect x="6.500" y="7" width="23" height="23" fill="#0c0c0c" />
      <text x="8.500" y="19.500" fontSize="13" fontWeight="700" fontFamily="Liberation Mono, monospace" fill="#fff">IJ</text>
      <path d="M9 26h9" stroke="#fff" strokeWidth="2" />
    </>
  ) },
  { id: "puttygen", art: (
    <>
      <path d="M4 6h22v4H12v3h-3v-3H8v4H4z" fill="#8a8a00" />
      <circle cx="30" cy="7" r="5" fill="#8a8a00" /><circle cx="31" cy="7" r="1.800" fill="#222" />
      <Computer x="1" y="18" />
      <path d="M28 6L14 17l5 1-6 6 13-9-5-1z" fill="#fff200" stroke="#665f00" strokeWidth=".5" />
    </>
  ) },
  { id: "putty", art: (
    <>
      <Computer x="15" y="0" />
      <Computer x="1" y="18" />
      <path d="M25 6L13 17l5 1-7 6 14-9-5-1z" fill="#fff200" stroke="#665f00" strokeWidth=".5" />
    </>
  ) },
  { id: "chrome", running: true, art: (
    <>
      <path d="M17.500 17.500L3.500 9.400A16.500 16.500 0 0 1 31.800 9.300H17.500z" fill="#dd4b3e" />
      <path d="M17.500 17.500L31.800 9.300A16.500 16.500 0 0 1 17.500 34l4-8z" fill="#fdc93b" />
      <path d="M17.500 9.300H31.800L26 20z" fill="#fdc93b" />
      <path d="M17.500 17.500L17.500 34A16.500 16.500 0 0 1 3.200 9.300l7 12z" fill="#1aa15f" />
      <path d="M24.500 21.500L17.500 34H15l6-10z" fill="#1aa15f" />
      <circle cx="17.500" cy="17.500" r="7.600" fill="#f1f1f1" /><circle cx="17.500" cy="17.500" r="6" fill="#4a8bf5" />
    </>
  ) },
  { id: "excel", running: true, art: (
    <>
      <rect x="19" y="5" width="12.500" height="24" fill="#fff" stroke="#207245" strokeWidth="1.200" />
      <path d="M20 8.500h11M20 12.500h11M20 16.500h11M20 20.500h11M20 24.500h11M25.500 5v24" stroke="#207245" strokeWidth="1.500" />
      <path d="M1 4.500L20 1v32L1 29.500z" fill="#207245" />
      <text x="5" y="23" fontSize="17" fontWeight="700" fontFamily="Open Sans, sans-serif" fill="#fff" textLength="10" lengthAdjust="spacingAndGlyphs">X</text>
    </>
  ) },
  { id: "vbox", running: true, active: true, art: (
    <>
      <ellipse cx="18" cy="31" rx="8" ry="3" fill="#8fa5c6" stroke="#e5ecf5" />
      <path d="M18 0L33 6.500V24L18 32 3 24V6.500z" fill="#dfe9f5" />
      <path d="M18 2.500l11.500 5L18 13 6.500 7.500z" fill="#193a66" />
      <path d="M5 9.500l11.500 5.500v13.500L5 22.500z" fill="#193a66" />
      <path d="M31 9.500l-11.500 5.500v13.500L31 22.500z" fill="#3f68a2" />
    </>
  ) },
  { id: "paint", running: true, art: (
    <>
      <path d="M17 5q15 0 15 13 0 13-12 14-5 0-5-4t-6-3q-7 0-7-7Q3 6 17 5z" fill="#b9def3" stroke="#7aaed0" strokeWidth=".7" />
      <circle cx="15.500" cy="20" r="2.200" fill="#222" />
      <circle cx="7" cy="18" r="2.600" fill="#e4544a" /><circle cx="12" cy="12" r="3" fill="#6fc04e" /><circle cx="19.500" cy="9.500" r="3.200" fill="#f6b93a" /><circle cx="26" cy="13" r="3" fill="#5aa0e0" />
      <path d="M29 10l2 1-11 23-2-1z" fill="#e88a2c" stroke="#a85c14" strokeWidth=".5" />
      <path d="M29 11l1-7-3-3q5-2 8 3 1 4-4 8z" fill="#d9a878" />
    </>
  ) },
];

function Taskbar() {
  return (
    <footer className="flex h-[60px] bg-[linear-gradient(90deg,#06140b_0px,#0c130f_50px,#141416_80px,#17151d_140px,#21180d_156px,#221a0f_280px,#170f0f_320px,#1a1011_420px,#1b1112_520px,#1f1c1b_550px,#150f0f_575px,#150f0f_650px,#201d1b_680px,#262321_800px,#211d1c_900px,#1a1010_990px,#120e0f_1100px,#1b1514_1220px,#100f10_1400px,#1b1b1c_1520px,#1f1f20_1650px,#1a0e0d_1690px,#1a0f0e_1750px,#1c1c1d_1765px,#1b1b1c_1920px)]">
      <div className="flex w-[72px] items-center justify-center">
        <svg className="h-6 w-6" viewBox="0 0 24 24" fill="#fff"><path d="M0 3.400l10.300-1.500v9.600H0zM11.400 1.700L24 0v11.500H11.400zM0 12.500h10.300v9.600L0 20.600zM11.400 12.500H24V24l-12.600-1.700z" /></svg>
      </div>
      <div className="flex w-[72px] items-center justify-center">
        <svg className="h-6 w-6" viewBox="0 0 24 24"><circle cx="12" cy="12" r="10" fill="none" stroke="#fff" strokeWidth="3" /></svg>
      </div>
      <div className="flex w-[76px] items-center justify-center pr-1">
        <svg className="h-5 w-[31px]" viewBox="0 0 31 20" fill="none" stroke="#fff" strokeWidth="1.200"><path d="M6.600.6h17.800v18.800H6.600zM4 3.600H.6v12.800H4M27 3.600h3.400v12.800H27" /></svg>
      </div>
      {taskApps.map((a) => (
        <div key={a.id} className={"relative flex flex-col items-center justify-center " + (a.active ? "w-[74px] bg-white/20" : "w-[75px]")}>
          <svg className="h-9 w-9" viewBox="0 0 36 36">{a.art}</svg>
          {a.running && <span className={"absolute bottom-0 h-[3px] bg-[#fddcae] " + (a.active ? "inset-x-0" : "inset-x-[7px]")} />}
          {a.active && <span className="absolute right-[6px] top-0 h-full w-0.5 bg-black/35" />}
        </div>
      ))}
      <div className="ml-auto flex items-center text-white">
        <svg className="h-6 w-[23px]" viewBox="0 0 23 24" fill="none" stroke="#fff" strokeWidth="1.600"><circle cx="15.500" cy="5" r="4" /><circle cx="7.500" cy="13" r="4" /><path d="M1 23q1-6 6.500-6 4 0 5.500 4M13 12q7-6 9.300 2" /></svg>
        <svg className="ml-[39px] h-[11px] w-[19px]" viewBox="0 0 19 11" fill="none" stroke="#fff" strokeWidth="1.400"><path d="M.7 10L9.500 1.200l8.800 8.800" /></svg>
        <svg className="ml-[26px] h-[20px] w-6" viewBox="0 0 24 20" fill="none" stroke="#fff" strokeWidth="1.300"><path d="M1 6.500h3.500L9 2v16l-4.500-4.500H1z" /><path d="M12.500 7.500q1.800 2.500 0 5" /><path d="M16 5q3.500 5 0 10M19.500 2.500q5 7.500 0 15" stroke="#888" /></svg>
        <svg className="ml-[27px] h-[20px] w-5" viewBox="0 0 20 20" fill="none" stroke="#fff" strokeWidth="1.200"><circle cx="17" cy="17" r="1.700" fill="#fff" stroke="none" /><path d="M11.500 18.500q0-6 7-7M7 18.500Q7 8 18.500 7M3.500 18.500Q3.500 4 18.500 3.500M.8 16Q3 1 18.500.8" /></svg>
        <svg className="ml-[26px] h-[13px] w-[23px]" viewBox="0 0 23 13"><rect x=".6" y=".6" width="20.300" height="11.800" fill="none" stroke="#fff" strokeWidth="1.200" /><rect x="2.300" y="2.300" width="17" height="8.400" fill="#fff" /><path d="M22 4v5" stroke="#fff" strokeWidth="1.600" /></svg>
        <div className="ml-[21px] flex w-[88px] flex-col items-center text-[17px] leading-7 tracking-[0.1px]">
          <span className="whitespace-nowrap">6:19 PM</span>
          <span className="whitespace-nowrap">1/14/2018</span>
        </div>
        <div className="relative ml-[26px] h-6 w-[36px]">
          <svg className="h-6 w-6" viewBox="0 0 24 24"><path d="M0 0h24v19H12v5l-6-5H0z" fill="#fff" /><path d="M5 5h14M5 9.500h14M5 14h9" stroke="#222" strokeWidth="1.300" /></svg>
          <span className="absolute left-[11px] top-[10px] flex h-[25px] w-[25px] items-center justify-center rounded-full border border-[#888] bg-[#2a2a2a]/95 text-[16px] leading-none text-white">7</span>
        </div>
        <span className="ml-[18px] mr-1.5 h-[60px] w-0.5 bg-[#707070]" />
      </div>
    </footer>
  );
}

export default function App() {
  return (
    <div className="flex h-[1080px] w-[1920px] flex-col overflow-hidden bg-white font-['Open_Sans',sans-serif]">
      <TitleBar />
      <MenuBar />
      <TopPanel />
      <div className="flex h-[901px]">
        <Launcher />
        <div className="flex flex-1 flex-col">
          <TabStrip />
          <NavBar />
          <Page />
        </div>
      </div>
      <StatusBar />
      <Taskbar />
    </div>
  );
}
